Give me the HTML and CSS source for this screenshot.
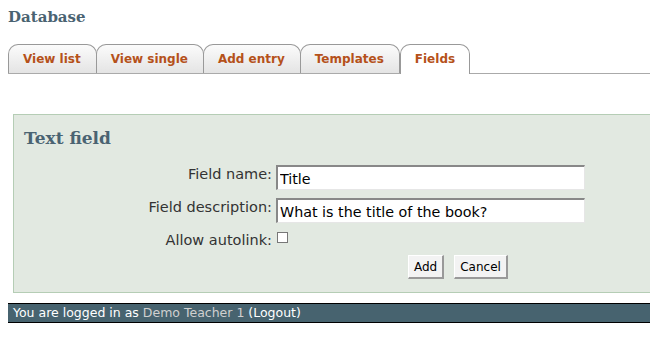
FILE: index.html
```html
<!DOCTYPE html>
<html lang="en">
  <head>
    <meta charset="UTF-8" />
    <title>Database - Fields</title>
    <link rel="stylesheet" href="styles.css">
  </head>
  <body>
    <h2 class="page-title">Database</h2>

    <ul class="tabs">
      <li class="tab"><a href="#">View list</a></li>
      <li class="tab"><a href="#">View single</a></li>
      <li class="tab"><a href="#">Add entry</a></li>
      <li class="tab"><a href="#">Templates</a></li>
      <li class="tab active"><a href="#">Fields</a></li>
    </ul>

    <div class="panel">
      <h3>Text field</h3>
      <form class="field-form">
        <label for="fieldName">Field name:</label>
        <input type="text" id="fieldName" value="Title" />

        <label for="fieldDesc">Field description:</label>
        <input type="text" id="fieldDesc" value="What is the title of the book?" />

        <label for="autolink">Allow autolink:</label>
        <div><input type="checkbox" id="autolink" class="check" /></div>

        <div class="buttons">
          <button type="submit">Add</button>
          <button type="button">Cancel</button>
        </div>
      </form>
    </div>

    <div class="footer">
      You are logged in as <a href="#" class="user">Demo Teacher 1</a>
      (<a href="#">Logout</a>)
    </div>
  </body>
</html>
```

FILE: styles.css
```css
body {
  margin: 8px;
  font-family: "DejaVu Sans", Verdana, sans-serif;
  font-size: 13px;
  color: #333;
  background: #fff;
  overflow: hidden;
}
.page-title {
  font-family: "DejaVu Serif", Georgia, serif;
  font-size: 15px;
  font-weight: bold;
  color: #4a6372;
  margin: 0;
  height: 35px;
}
.tabs {
  list-style: none;
  margin: 0 -8px 0 0;
  padding: 0;
  display: flex;
  align-items: flex-end;
  height: 30px;
  border-bottom: 1px solid #aaa;
}
.tab {
  border: 1px solid #999;
  border-bottom: none;
  border-radius: 10px 10px 0 0;
  background: linear-gradient(#fbfbfb, #e4e4e4);
  box-sizing: border-box;
  height: 29px;
  margin-right: -1px;
}
.tab a {
  display: block;
  padding: 7px 15px 0 14px;
  font-weight: bold;
  font-size: 12px;
  color: #b5511a;
  text-decoration: none;
}
.tab.active {
  background: #fff;
  height: 30px;
  margin-bottom: -1px;
  margin-left: 1px;
}
.tab.active a {
  padding: 7px 14px 0;
}
.panel {
  margin: 40px -12px 0 5px;
  background: #e2e9e1;
  border: 1px solid #b5cdb5;
  padding: 8px 10px 12px;
  height: 157px;
}
.panel h3 {
  font-family: "DejaVu Serif", Georgia, serif;
  font-size: 17px;
  font-weight: bold;
  color: #4a6372;
  margin: 5px 0 17px;
}
.field-form {
  display: grid;
  grid-template-columns: 248px 309px;
  column-gap: 4px;
  row-gap: 8px;
  align-items: start;
}
.field-form label {
  text-align: right;
  font-size: 14.5px;
  padding-top: 1px;
  color: #333;
}
.field-form input[type="text"] {
  font-family: "DejaVu Sans", Verdana, sans-serif;
  font-size: 14.3px;
  color: #000;
  height: 25px;
  box-sizing: border-box;
  padding: 2px 2px 0;
  margin: 0;
  background: #fff;
  border-top: 2px solid #888;
  border-left: 2px solid #888;
  border-right: 1px solid #e6e6e6;
  border-bottom: 1px solid #e6e6e6;
  outline: none;
}
.check {
  appearance: none;
  width: 11px;
  height: 11px;
  margin: 1px 0 0 1px;
  background: #fff;
  border: 1px solid #777;
  border-radius: 0;
}
.buttons {
  grid-column: 2;
  display: flex;
  gap: 10px;
  padding-left: 132px;
  margin-top: -1px;
}
.buttons button {
  font-family: "DejaVu Sans", Verdana, sans-serif;
  font-size: 12px;
  color: #000;
  background: #f3f3f3;
  height: 24px;
  padding: 0 5px;
  border-top: 1px solid #fff;
  border-left: 1px solid #fff;
  border-right: 2px solid #999;
  border-bottom: 2px solid #999;
}
.footer {
  margin: 10px -8px 0;
  background: #47636f;
  border-top: 1px solid #000;
  border-bottom: 1px solid #000;
  color: #fff;
  font-size: 12.5px;
  padding: 1px 13px;
  height: 16px;
  line-height: 16px;
}
.footer a {
  color: #fff;
  text-decoration: none;
}
.footer a.user {
  color: #d0d0d0;
}
```
